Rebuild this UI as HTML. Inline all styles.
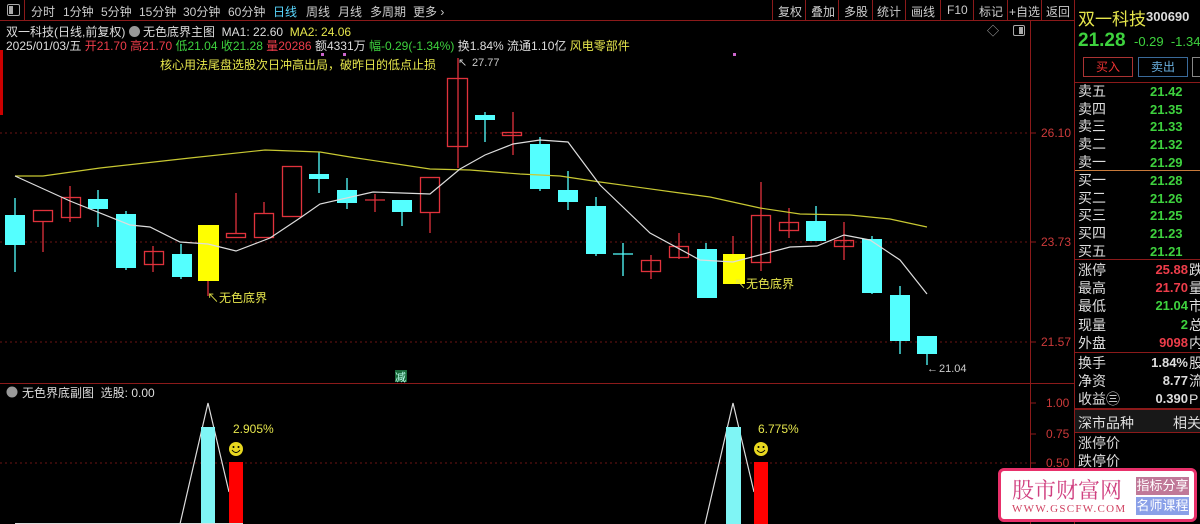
<!DOCTYPE html>
<html><head><meta charset="utf-8">
<style>
*{margin:0;padding:0;box-sizing:border-box}
body{width:1200px;height:524px;background:#000;overflow:hidden;font-family:"Liberation Sans","Noto Sans CJK SC",sans-serif;color:#ccc;position:relative}
.a{position:absolute;white-space:nowrap}
.tb{font-size:12px;color:#ccc;top:3px}
.rp{font-size:14px;color:#ddd}
.g{color:#3ed23e}.r{color:#ee3d4a}.y{color:#e6e64c}.w{color:#ddd}
</style></head><body>
<!-- toolbar -->
<div class="a" style="left:0;top:0;width:1075px;height:21px;border-bottom:1px solid #8b1a1a"></div>
<div class="a" style="left:7px;top:4px;width:13px;height:12px;border:1px solid #aaa;border-radius:2px"></div>
<div class="a" style="left:9px;top:6px;width:4px;height:8px;background:#aaa"></div>
<div class="a" style="left:24px;top:0;width:1px;height:21px;background:#8b1a1a"></div>
<div class="a tb" style="left:31px">分时</div><div class="a tb" style="left:63px">1分钟</div><div class="a tb" style="left:101px">5分钟</div><div class="a tb" style="left:139px">15分钟</div><div class="a tb" style="left:183px">30分钟</div><div class="a tb" style="left:228px">60分钟</div><div class="a tb" style="left:273px;color:#5ad8ff">日线</div><div class="a tb" style="left:306px">周线</div><div class="a tb" style="left:338px">月线</div><div class="a tb" style="left:370px">多周期</div><div class="a tb" style="left:413px">更多 ›</div>
<div class="a tb" style="left:778px;word-spacing:0">复权</div><div class="a tb" style="left:811px">叠加</div><div class="a tb" style="left:844px">多股</div><div class="a tb" style="left:877px">统计</div><div class="a tb" style="left:911px">画线</div><div class="a tb" style="left:947px">F10</div><div class="a tb" style="left:979px">标记</div><div class="a tb" style="left:1009px">+自选</div><div class="a tb" style="left:1046px">返回</div>
<svg class="a" style="left:0;top:0" width="1075" height="21"><g stroke="#8b1a1a"><line x1="772.5" y1="0" x2="772.5" y2="21"/><line x1="805.5" y1="0" x2="805.5" y2="21"/><line x1="838.5" y1="0" x2="838.5" y2="21"/><line x1="872.5" y1="0" x2="872.5" y2="21"/><line x1="905.5" y1="0" x2="905.5" y2="21"/><line x1="940.5" y1="0" x2="940.5" y2="21"/><line x1="973.5" y1="0" x2="973.5" y2="21"/><line x1="1007.5" y1="0" x2="1007.5" y2="21"/><line x1="1041.5" y1="0" x2="1041.5" y2="21"/></g></svg>
<div class="a" style="left:0;top:50px;width:3px;height:65px;background:#c00"></div>
<!-- info -->
<div class="a" style="left:6px;top:23px;font-size:12px;color:#ddd">双一科技(日线,前复权) <span style="display:inline-block;width:11px;height:11px;border-radius:6px;background:#999;vertical-align:-1px"></span> 无色底界主图&nbsp; MA1: 22.60&nbsp; <span class="y">MA2: 24.06</span></div>
<div class="a" style="left:6px;top:37px;font-size:12px;color:#ddd">2025/01/03/五 <span class="r">开21.70 高21.70</span> <span class="g">低21.04 收21.28</span> <span class="r">量20286</span> 额4331万 <span class="g">幅-0.29(-1.34%)</span> 换1.84% 流通1.10亿 <span class="y">风电零部件</span></div>
<div class="a y" style="left:160px;top:56px;font-size:12px">核心用法尾盘选股次日冲高出局，破昨日的低点止损</div>
<div class="a" style="left:987px;top:22px;font-size:12px;color:#aaa">◇</div>
<div class="a" style="left:1013px;top:25px;width:12px;height:11px;border:1px solid #aaa;border-radius:2px"></div><div class="a" style="left:1019px;top:27px;width:4px;height:7px;background:#aaa"></div>
<svg class="a" style="left:0;top:0" width="1075" height="524">
<g stroke="#6b1515" stroke-dasharray="2,3"><line x1="0" y1="133" x2="1030" y2="133"/><line x1="0" y1="242" x2="1030" y2="242"/><line x1="0" y1="342" x2="1030" y2="342"/><line x1="0" y1="463" x2="1030" y2="463"/></g>
<line x1="1030.5" y1="21" x2="1030.5" y2="524" stroke="#8b1a1a"/>
<line x1="0" y1="383.5" x2="1075" y2="383.5" stroke="#8b1a1a"/>
<line x1="1074.5" y1="0" x2="1074.5" y2="524" stroke="#8b1a1a"/>
<g stroke="#8b1a1a"><line x1="1030" y1="133" x2="1036" y2="133"/><line x1="1030" y1="242" x2="1036" y2="242"/><line x1="1030" y1="342" x2="1036" y2="342"/><line x1="1030" y1="403" x2="1036" y2="403"/><line x1="1030" y1="434" x2="1036" y2="434"/><line x1="1030" y1="463" x2="1036" y2="463"/></g>
<g fill="#cc3a3a" font-size="12" font-family="Liberation Sans"><text x="1041" y="137">26.10</text><text x="1041" y="246">23.73</text><text x="1041" y="346">21.57</text><text x="1046" y="407">1.00</text><text x="1046" y="438">0.75</text><text x="1046" y="467">0.50</text></g>
<!-- candles -->
<g stroke="#54ffff" stroke-width="1.3">
<line x1="15" y1="198" x2="15" y2="272"/><line x1="98" y1="190" x2="98" y2="227"/><line x1="126" y1="211" x2="126" y2="270"/><line x1="181" y1="244" x2="181" y2="279"/><line x1="319" y1="152" x2="319" y2="193"/><line x1="347" y1="178" x2="347" y2="209"/><line x1="402" y1="200" x2="402" y2="226"/><line x1="485" y1="112" x2="485" y2="142"/><line x1="540" y1="137" x2="540" y2="191"/><line x1="568" y1="171" x2="568" y2="210"/><line x1="596" y1="197" x2="596" y2="256"/><line x1="623" y1="243" x2="623" y2="276"/><line x1="613" y1="254" x2="633" y2="254"/><line x1="706" y1="243" x2="706" y2="298"/><line x1="816" y1="206" x2="816" y2="241"/><line x1="872" y1="236" x2="872" y2="294"/><line x1="900" y1="286" x2="900" y2="354"/><line x1="927" y1="336" x2="927" y2="365"/>
</g>
<g fill="#54ffff">
<rect x="5" y="215" width="20" height="30"/><rect x="88" y="199" width="20" height="10"/><rect x="116" y="214" width="20" height="54"/><rect x="172" y="254" width="20" height="23"/><rect x="309" y="174" width="20" height="5"/><rect x="337" y="190" width="20" height="13"/><rect x="392" y="200" width="20" height="12"/><rect x="475" y="115" width="20" height="5"/><rect x="530" y="144" width="20" height="45"/><rect x="558" y="190" width="20" height="12"/><rect x="586" y="206" width="20" height="48"/><rect x="697" y="249" width="20" height="49"/><rect x="806" y="221" width="20" height="20"/><rect x="862" y="239" width="20" height="54"/><rect x="890" y="295" width="20" height="46"/><rect x="917" y="336" width="20" height="18"/>
</g>
<g stroke="#e0323c" stroke-width="1.3" fill="none">
<line x1="43" y1="221" x2="43" y2="252"/><rect x="33.5" y="210.5" width="19" height="11"/>
<line x1="70" y1="186" x2="70" y2="222"/><rect x="61.5" y="197.5" width="19" height="20"/>
<line x1="153" y1="246" x2="153" y2="272"/><rect x="144.5" y="251.5" width="19" height="13"/>
<line x1="236" y1="193" x2="236" y2="233"/><rect x="226.5" y="233.5" width="19" height="4"/>
<line x1="264" y1="202" x2="264" y2="213"/><rect x="254.5" y="213.5" width="19" height="24"/>
<rect x="282.5" y="166.5" width="19" height="50"/>
<line x1="375" y1="194" x2="375" y2="212"/><line x1="365" y1="200" x2="385" y2="200"/>
<line x1="430" y1="212" x2="430" y2="233"/><rect x="420.5" y="177.5" width="19" height="35"/>
<line x1="458" y1="58" x2="458" y2="168"/><rect x="447.5" y="78.5" width="20" height="68"/>
<line x1="513" y1="112" x2="513" y2="155"/><rect x="502.5" y="132.5" width="19" height="3"/>
<line x1="651" y1="255" x2="651" y2="279"/><rect x="641.5" y="260.5" width="19" height="11"/>
<line x1="679" y1="233" x2="679" y2="259"/><rect x="669.5" y="246.5" width="19" height="11"/>
<line x1="761" y1="182" x2="761" y2="271"/><rect x="751.5" y="215.5" width="19" height="47"/>
<line x1="789" y1="208" x2="789" y2="238"/><rect x="779.5" y="222.5" width="19" height="8"/>
<line x1="844" y1="222" x2="844" y2="260"/><rect x="834.5" y="240.5" width="19" height="6"/>
<line x1="208" y1="281" x2="208" y2="296"/><line x1="733" y1="236" x2="733" y2="254"/>
</g>
<rect x="198" y="225" width="21" height="56" fill="#ffff00"/>
<rect x="723" y="254" width="22" height="30" fill="#ffff00"/>
<polyline fill="none" stroke="#c8c832" stroke-width="1.2" points="15,176 43,176 100,168 190,158 265,150 320,152 350,157 430,169 470,170 520,174 560,176 600,182 680,193 710,197 760,208 800,214 850,215 890,219 927,227"/>
<polyline fill="none" stroke="#dddddd" stroke-width="1.2" points="15,176 70,201 130,225 150,227 180,242 208,244 236,251 270,238 300,218 320,204 373,192 430,194 460,169 485,155 513,144 540,140 568,142 600,185 650,233 700,260 733,262 790,247 817,246 844,235 870,240 900,260 927,294"/>
<g fill="#cc66cc"><rect x="321" y="53" width="3" height="3"/><rect x="343" y="53" width="3" height="3"/><rect x="733" y="53" width="3" height="3"/></g>
<g fill="#ccc" font-size="11" font-family="Liberation Sans"><text x="458" y="66">↖</text><text x="472" y="66">27.77</text><text x="927" y="372">←</text><text x="939" y="372">21.04</text></g>
<g fill="#e6e64c" font-size="12" font-family="Liberation Sans,Noto Sans CJK SC"><text x="207" y="302">↖无色底界</text><text x="734" y="288">↖无色底界</text></g>
<rect x="395" y="370" width="12" height="12" fill="#1a6a3a"/><text x="395" y="381" fill="#bfe" font-size="11" font-family="Noto Sans CJK SC">减</text>
<!-- sub chart -->
<circle cx="12" cy="392" r="5.5" fill="#999"/>
<text x="22" y="397" fill="#ddd" font-size="12" font-family="Liberation Sans,Noto Sans CJK SC">无色界底副图&nbsp; 选股: 0.00</text>
<polyline fill="none" stroke="#ddd" stroke-width="1.2" points="180,524 208,403 229,492"/>
<rect x="201" y="427" width="14" height="97" fill="#7ff5f5"/>
<rect x="229" y="462" width="14" height="62" fill="#ff0000"/>
<polyline fill="none" stroke="#ddd" stroke-width="1.2" points="705,524 733,403 754,492"/>
<rect x="726" y="427" width="15" height="97" fill="#7ff5f5"/>
<rect x="754" y="462" width="14" height="62" fill="#ff0000"/>
<line x1="15" y1="523.5" x2="243" y2="523.5" stroke="#ddd"/>
<g fill="#e6e64c" font-size="12" font-family="Liberation Sans"><text x="233" y="433">2.905%</text><text x="758" y="433">6.775%</text></g>
<g><circle cx="236" cy="449" r="7" fill="#e8d820"/><circle cx="761" cy="449" r="7" fill="#e8d820"/>
<g fill="#000"><circle cx="233.5" cy="447" r="1"/><circle cx="238.5" cy="447" r="1"/><circle cx="758.5" cy="447" r="1"/><circle cx="763.5" cy="447" r="1"/></g>
<g fill="none" stroke="#000"><path d="M232,450 Q236,455 240,450"/><path d="M757,450 Q761,455 765,450"/></g></g>
</svg>
<!-- right panel -->
<div class="a" style="left:1078px;top:5px;font-size:17px;color:#e6e64c">双一科技</div>
<div class="a" style="left:1146px;top:9px;font-size:13px;color:#ddd;font-weight:bold">300690</div>
<div class="a g" style="left:1078px;top:30px;font-size:19px;font-weight:bold">21.28</div>
<div class="a g" style="left:1134px;top:34px;font-size:13px">-0.29&nbsp; -1.34</div>
<div class="a" style="left:1083px;top:57px;width:50px;height:20px;border:1px solid #a33;color:#e33;font-size:12px;text-align:center;line-height:18px">买入</div>
<div class="a" style="left:1138px;top:57px;width:50px;height:20px;border:1px solid #3a6a9a;color:#6ab0e0;font-size:12px;text-align:center;line-height:18px">卖出</div>
<div class="a" style="left:1192px;top:57px;width:10px;height:20px;border:1px solid #888"></div>
<div class="a" style="left:1075px;top:82px;width:125px;height:1px;background:#8b1a1a"></div>
<div class="a" style="left:1075px;top:170px;width:125px;height:1px;background:#c87a3a"></div>
<div class="a" style="left:1075px;top:259px;width:125px;height:1px;background:#8b1a1a"></div>
<div class="a" style="left:1075px;top:352px;width:125px;height:1px;background:#8b1a1a"></div>
<div class="a" style="left:1075px;top:408px;width:125px;height:2px;background:#8b1a1a"></div>
<div class="a" style="left:1075px;top:410px;width:125px;height:22px;background:#181818"></div>
<div class="a" style="left:1075px;top:432px;width:125px;height:1px;background:#8b1a1a"></div>
<div class="a rp" style="left:1078px;top:83px;line-height:17.7px">卖五<br>卖四<br>卖三<br>卖二<br>卖一</div>
<div class="a rp g" style="left:1150px;top:83px;line-height:17.7px;font-weight:bold;font-size:13px">21.42<br>21.35<br>21.33<br>21.32<br>21.29</div>
<div class="a rp" style="left:1078px;top:172px;line-height:17.7px">买一<br>买二<br>买三<br>买四<br>买五</div>
<div class="a rp g" style="left:1150px;top:172px;line-height:17.7px;font-weight:bold;font-size:13px">21.28<br>21.26<br>21.25<br>21.23<br>21.21</div>
<div class="a rp" style="left:1078px;top:261px;line-height:18.2px">涨停<br>最高<br>最低<br>现量<br>外盘</div>
<div class="a rp" style="left:1150px;top:261px;line-height:18.2px;font-weight:bold;font-size:13px;text-align:right;width:38px"><span class="r">25.88</span><br><span class="r">21.70</span><br><span class="g">21.04</span><br><span class="g">2</span><br><span class="r">9098</span></div>
<div class="a rp" style="left:1189px;top:261px;line-height:18.2px">跌<br>量<br>市<br>总<br>内</div>
<div class="a rp" style="left:1078px;top:354px;line-height:18.2px">换手<br>净资<br>收益㊂</div>
<div class="a rp" style="left:1140px;top:354px;line-height:18.2px;font-weight:bold;font-size:13px;text-align:right;width:48px">1.84%<br>8.77<br>0.390</div>
<div class="a rp" style="left:1189px;top:354px;line-height:18.2px">股<br>流<br>P</div>
<div class="a rp" style="left:1078px;top:413px">深市品种</div>
<div class="a rp" style="left:1173px;top:413px">相关</div>
<div class="a rp" style="left:1078px;top:434px;line-height:18px">涨停价<br>跌停价</div>
<!-- watermark -->
<div class="a" style="left:998px;top:468px;width:199px;height:54px;background:#fff;border:3px solid #e8306a;border-radius:6px"></div>
<div class="a" style="left:1012px;top:474px;font-size:22px;color:#d04080;font-family:'Noto Serif CJK SC',serif;letter-spacing:0">股市财富网</div>
<div class="a" style="left:1012px;top:503px;font-size:11px;color:#d04060;font-family:'Liberation Serif',serif;letter-spacing:1.3px">WWW.GSCFW.COM</div>
<div class="a" style="left:1136px;top:477px;width:53px;height:18px;background:#c07898;color:#fff;font-size:13px;text-align:center;line-height:18px">指标分享</div>
<div class="a" style="left:1136px;top:497px;width:53px;height:18px;background:#8aa0e8;color:#fff;font-size:13px;text-align:center;line-height:18px">名师课程</div>
</body></html>
